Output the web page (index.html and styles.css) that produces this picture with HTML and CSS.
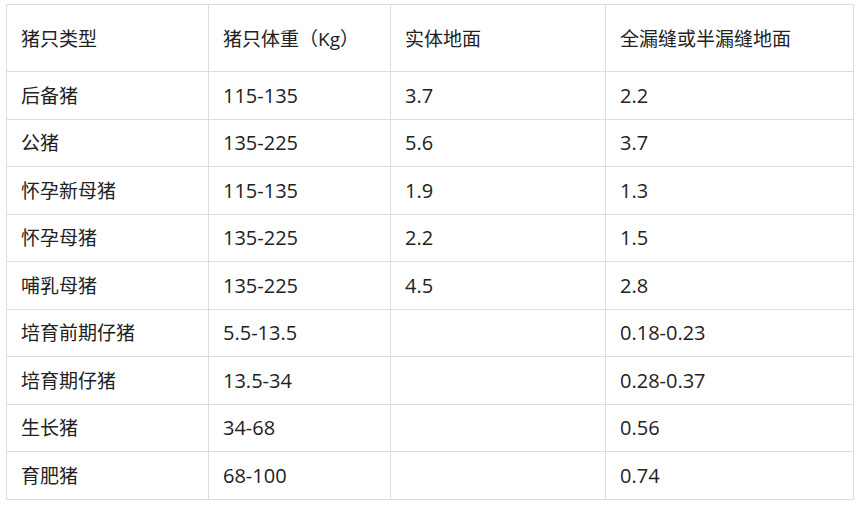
FILE: index.html
```html
<!DOCTYPE html>
<html lang="zh">
<head>
<meta charset="utf-8">
<link rel="stylesheet" href="styles.css">
</head>
<body>
<table class="grid">
  <colgroup>
    <col class="c1"><col class="c2"><col class="c3"><col class="c4">
  </colgroup>
  <tr class="head"><td>猪只类型</td><td>猪只体重（Kg）</td><td>实体地面</td><td>全漏缝或半漏缝地面</td></tr>
  <tr><td>后备猪</td><td>115-135</td><td>3.7</td><td>2.2</td></tr>
  <tr><td>公猪</td><td>135-225</td><td>5.6</td><td>3.7</td></tr>
  <tr><td>怀孕新母猪</td><td>115-135</td><td>1.9</td><td>1.3</td></tr>
  <tr><td>怀孕母猪</td><td>135-225</td><td>2.2</td><td>1.5</td></tr>
  <tr><td>哺乳母猪</td><td>135-225</td><td>4.5</td><td>2.8</td></tr>
  <tr><td>培育前期仔猪</td><td>5.5-13.5</td><td></td><td>0.18-0.23</td></tr>
  <tr><td>培育期仔猪</td><td>13.5-34</td><td></td><td>0.28-0.37</td></tr>
  <tr><td>生长猪</td><td>34-68</td><td></td><td>0.56</td></tr>
  <tr><td>育肥猪</td><td>68-100</td><td></td><td>0.74</td></tr>
</table>
</body>
</html>
```
FILE: styles.css
```css
html, body {
  margin: 0;
  padding: 0;
  background: #ffffff;
}
body {
  padding: 4px 0 0 6px;
  font-family: "Open Sans", "Noto Sans CJK SC", sans-serif;
  color: #222222;
}
.grid {
  border-collapse: collapse;
  table-layout: fixed;
  width: 847px;
  font-size: 20px;
}
.c1 { width: 202px; }
.c2 { width: 182px; }
.c3 { width: 215px; }
.c4 { width: 248px; }
.grid td {
  border: 1px solid #dddddd;
  padding: 1px 0 0 14px;
  height: 45.5px;
  vertical-align: middle;
  line-height: 24px;
  white-space: nowrap;
}
.grid td:first-child,
.grid .head td {
  font-size: 19px;
}
.grid .head td {
  height: 65px;
}
```
